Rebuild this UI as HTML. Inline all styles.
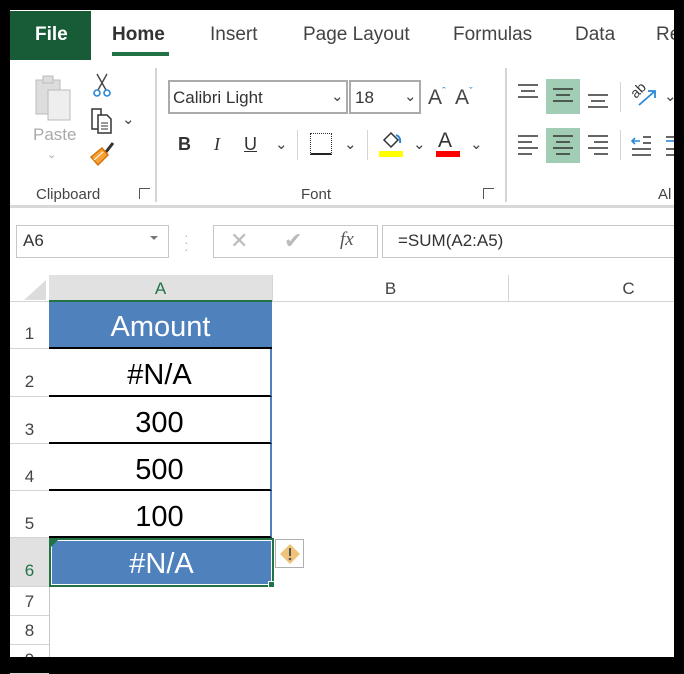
<!DOCTYPE html>
<html><head><meta charset="utf-8"><style>
*{margin:0;padding:0;box-sizing:border-box}
body{width:684px;height:667px;background:#000;position:relative;overflow:hidden;font-family:"Liberation Sans",sans-serif}
.a{position:absolute}
.w{background:#fff}
.t{position:absolute;font-size:19px;color:#444;top:24px}
.sm{font-size:15px;color:#444}
.hdr{font-size:17px;color:#444;text-align:center}
.rn{position:absolute;left:10px;width:39px;text-align:center;font-size:17px;color:#444;border-bottom:1px solid #d4d4d4}
.cell{position:absolute;left:49px;width:223px;text-align:center;font-size:29px;color:#000;background:#fff;border-bottom:2px solid #000;border-right:2px solid #4f81bd}
</style></head><body>
<div class="a w" style="left:10px;top:10px;width:664px;height:647px"></div>
<!-- tabs -->
<div class="a" style="left:10px;top:11px;width:81px;height:49px;background:#185c37"></div>
<div class="t" style="left:35px;color:#fff;font-weight:bold">File</div>
<div class="t" style="left:112px;color:#333;font-weight:bold">Home</div>
<div class="a" style="left:112px;top:52px;width:57px;height:4px;background:#217346"></div>
<div class="t" style="left:210px">Insert</div>
<div class="t" style="left:303px">Page Layout</div>
<div class="t" style="left:453px">Formulas</div>
<div class="t" style="left:575px">Data</div>
<div class="t" style="left:656px">Re</div>
<!-- ribbon -->
<div class="a" style="left:10px;top:205px;width:664px;height:3px;background:#d8d8d8"></div>
<div class="a" style="left:155px;top:68px;width:2px;height:134px;background:#d4d4d4"></div>
<div class="a" style="left:381px;top:68px;width:0"></div>
<div class="a" style="left:505px;top:68px;width:2px;height:134px;background:#d4d4d4"></div>
<!-- clipboard -->
<svg class="a" style="left:34px;top:72px" width="40" height="50"><rect x="2" y="8" width="24" height="34" fill="#ddd" stroke="#bbb"/><rect x="9" y="4" width="10" height="7" fill="#ddd" stroke="#bbb"/><rect x="14" y="18" width="22" height="30" fill="#eee" stroke="#bbb"/></svg>
<div class="a" style="left:33px;top:125px;font-size:17px;color:#aaa">Paste</div>
<div class="a" style="left:47px;top:148px;font-size:11px;color:#aaa">⌄</div>
<svg class="a" style="left:92px;top:72px" width="20" height="26"><path d="M5 2 L14 18 M15 2 L6 18" stroke="#444" stroke-width="1.4" fill="none"/><circle cx="5" cy="21" r="3" stroke="#2b88d8" stroke-width="1.6" fill="none"/><circle cx="15" cy="21" r="3" stroke="#2b88d8" stroke-width="1.6" fill="none"/></svg>
<svg class="a" style="left:90px;top:107px" width="26" height="28"><path d="M2 2h9v20h-9z" fill="#fff" stroke="#333" stroke-width="1.5"/><path d="M8 8h9l4 4v14h-13z" fill="#fff" stroke="#333" stroke-width="1.5"/><path d="M11 16h7M11 19h7M11 22h7" stroke="#333"/></svg>
<div class="a sm" style="left:122px;top:110px">⌄</div>
<svg class="a" style="left:88px;top:140px" width="30" height="28"><path d="M18 12 L25 3" stroke="#333" stroke-width="3"/><path d="M3 17 L14 8 L20 15 L10 25 Z" fill="#f6a23b" stroke="#d86e00" stroke-width="1.4"/><path d="M6 20 L15 12" stroke="#fff"/></svg>
<div class="a sm" style="left:36px;top:186px">Clipboard</div>
<div class="a" style="left:139px;top:188px;width:11px;height:11px;border:1px solid #555;border-right:none;border-bottom:none"></div>
<!-- font -->
<div class="a" style="left:168px;top:80px;width:180px;height:34px;border:2px solid #aaa"></div>
<div class="a" style="left:173px;top:88px;font-size:17px;color:#333">Calibri Light</div>
<div class="a sm" style="left:331px;top:87px">⌄</div>
<div class="a" style="left:349px;top:80px;width:72px;height:34px;border:2px solid #aaa"></div>
<div class="a" style="left:355px;top:88px;font-size:17px;color:#333">18</div>
<div class="a sm" style="left:404px;top:87px">⌄</div>
<div class="a" style="left:428px;top:86px;font-size:21px;color:#444">A<span style="font-size:11px;color:#2b88d8;vertical-align:top">ˆ</span></div>
<div class="a" style="left:455px;top:86px;font-size:21px;color:#444">A<span style="font-size:11px;color:#2b88d8;vertical-align:top">ˇ</span></div>
<div class="a" style="left:178px;top:134px;font-size:18px;font-weight:bold;color:#333">B</div>
<div class="a" style="left:214px;top:134px;font-size:18px;font-style:italic;color:#333;font-family:'Liberation Serif',serif">I</div>
<div class="a" style="left:244px;top:134px;font-size:18px;color:#333;text-decoration:underline">U</div>
<div class="a sm" style="left:275px;top:135px">⌄</div>
<div class="a" style="left:297px;top:130px;width:1px;height:30px;background:#d4d4d4"></div>
<div class="a" style="left:310px;top:133px;width:22px;height:22px;border:1px dotted #333;border-bottom:2px solid #222"></div>
<div class="a sm" style="left:344px;top:135px">⌄</div>
<div class="a" style="left:367px;top:130px;width:1px;height:30px;background:#d4d4d4"></div>
<svg class="a" style="left:380px;top:130px" width="26" height="20"><path d="M4 10 L11 3 L18 10 L11 17 Z" fill="#fff" stroke="#333" stroke-width="1.5"/><path d="M16 5 q5 2 4 8" stroke="#2b88d8" stroke-width="2" fill="none"/></svg>
<div class="a" style="left:379px;top:151px;width:24px;height:6px;background:#ffff00"></div>
<div class="a sm" style="left:413px;top:135px">⌄</div>
<div class="a" style="left:438px;top:129px;font-size:21px;color:#333">A</div>
<div class="a" style="left:436px;top:151px;width:24px;height:6px;background:#f00"></div>
<div class="a sm" style="left:470px;top:135px">⌄</div>
<div class="a sm" style="left:301px;top:186px">Font</div>
<div class="a" style="left:483px;top:188px;width:11px;height:11px;border:1px solid #555;border-right:none;border-bottom:none"></div>
<!-- alignment -->
<div class="a" style="left:546px;top:79px;width:34px;height:35px;background:#a0cdb3"></div>
<div class="a" style="left:546px;top:128px;width:34px;height:35px;background:#a0cdb3"></div>
<svg class="a" style="left:515px;top:80px" width="100" height="90">
<g stroke="#333" stroke-width="1.6">
<path d="M3 5h20M6 11h14M3 17h20"/>
<path d="M38 9h20M41 15h14M38 21h20"/>
<path d="M73 15h20M76 21h14M73 27h20"/>
<path d="M3 56h20M3 62h14M3 68h20M3 74h14"/>
<path d="M38 56h20M41 62h14M38 68h20M41 74h14"/>
<path d="M73 56h20M79 62h14M73 68h20M79 74h14"/>
</g></svg>
<div class="a" style="left:620px;top:82px;width:1px;height:30px;background:#d4d4d4"></div>
<div class="a" style="left:620px;top:130px;width:1px;height:30px;background:#d4d4d4"></div>
<div class="a" style="left:630px;top:82px;font-size:14px;color:#333;transform:rotate(-45deg)">ab</div>
<svg class="a" style="left:636px;top:86px" width="24" height="22"><path d="M3 19 L19 5 M12 5h7v7" stroke="#2b88d8" stroke-width="1.8" fill="none"/></svg>
<div class="a sm" style="left:664px;top:87px">⌄</div>
<svg class="a" style="left:630px;top:133px" width="44" height="28"><path d="M2 8h8M5 5l-3 3 3 3" stroke="#2b88d8" stroke-width="1.6" fill="none"/><path d="M13 4h8M13 10h8M2 16h19M2 22h19" stroke="#333" stroke-width="1.6"/><path d="M36 8h8" stroke="#2b88d8" stroke-width="1.6"/><path d="M36 4h8M36 16h8M36 22h8" stroke="#333" stroke-width="1.6"/></svg>
<div class="a sm" style="left:658px;top:186px">Al</div>
<!-- formula bar -->
<div class="a" style="left:16px;top:225px;width:153px;height:33px;border:1px solid #c6c6c6"></div>
<div class="a" style="left:23px;top:231px;font-size:17px;color:#333">A6</div>
<div class="a" style="left:150px;top:236px;width:0;height:0;border-left:4px solid transparent;border-right:4px solid transparent;border-top:4px solid #777"></div>
<div class="a" style="left:184px;top:232px;color:#bbb;font-size:14px;line-height:7px">·<br>·<br>·</div>
<div class="a" style="left:213px;top:225px;width:165px;height:33px;border:1px solid #c6c6c6"></div>
<div class="a" style="left:230px;top:228px;font-size:22px;color:#bbb">✕</div>
<div class="a" style="left:284px;top:228px;font-size:22px;color:#bbb">✔</div>
<div class="a" style="left:340px;top:229px;font-size:19px;color:#555;font-style:italic;font-family:'Liberation Serif',serif">fx</div>
<div class="a" style="left:382px;top:225px;width:292px;height:33px;border:1px solid #c6c6c6;border-right:none"></div>
<div class="a" style="left:398px;top:231px;font-size:17px;color:#333">=SUM(A2:A5)</div>
<!-- column headers -->
<div class="a" style="left:10px;top:275px;width:664px;height:27px;border-bottom:1px solid #d4d4d4"></div>
<svg class="a" style="left:20px;top:278px" width="28" height="24"><path d="M26 2 L26 22 L4 22 Z" fill="#dcdcdc"/></svg>
<div class="a hdr" style="left:49px;top:275px;width:223px;height:27px;background:#e1e1e1;border-bottom:2px solid #217346;color:#217346;line-height:27px">A</div>
<div class="a hdr" style="left:272px;top:275px;width:236px;height:27px;border-left:1px solid #d4d4d4;line-height:27px">B</div>
<div class="a hdr" style="left:508px;top:275px;width:240px;height:27px;border-left:1px solid #d4d4d4;line-height:27px">C</div>
<!-- row headers -->
<div class="a" style="left:49px;top:302px;width:1px;height:355px;background:#c6c6c6"></div>
<div class="rn" style="top:302px;height:47px;line-height:64px">1</div>
<div class="rn" style="top:349px;height:48px;line-height:66px">2</div>
<div class="rn" style="top:397px;height:47px;line-height:66px">3</div>
<div class="rn" style="top:444px;height:47px;line-height:66px">4</div>
<div class="rn" style="top:491px;height:47px;line-height:66px">5</div>
<div class="rn" style="top:538px;height:49px;line-height:66px;background:#e1e1e1;color:#217346">6</div>
<div class="rn" style="top:587px;height:29px;line-height:29px">7</div>
<div class="rn" style="top:616px;height:29px;line-height:29px">8</div>
<div class="rn" style="top:645px;height:29px;line-height:29px">9</div>
<!-- cells -->
<div class="a" style="left:49px;top:302px;width:223px;height:47px;background:#4f81bd;color:#fff;font-size:29px;text-align:center;line-height:50px;border-bottom:2px solid #000">Amount</div>
<div class="cell" style="top:349px;height:48px;line-height:52px">#N/A</div>
<div class="cell" style="top:397px;height:47px;line-height:52px">300</div>
<div class="cell" style="top:444px;height:47px;line-height:52px">500</div>
<div class="cell" style="top:491px;height:47px;line-height:52px">100</div>
<div class="a" style="left:49px;top:538px;width:225px;height:49px;background:#4f81bd;border:2px solid #217346;box-shadow:inset 0 0 0 1px #fff;color:#fff;font-size:29px;text-align:center;line-height:48px">#N/A</div>
<div class="a" style="left:51px;top:540px;width:0;height:0;border-top:7px solid #217346;border-right:7px solid transparent"></div>
<div class="a" style="left:268px;top:581px;width:7px;height:7px;background:#217346;border:1px solid #fff"></div>
<div class="a" style="left:275px;top:539px;width:29px;height:29px;border:1px solid #b0b0b0;background:#fff"></div>
<svg class="a" style="left:278px;top:542px" width="24" height="24"><path d="M12 2 L22 12 L12 22 L2 12 Z" fill="#efc47a"/><path d="M12 6v8" stroke="#555" stroke-width="2"/><circle cx="12" cy="17" r="1.3" fill="#555"/></svg>
<!-- black frame -->
<div class="a" style="left:0;top:657px;width:684px;height:10px;background:#000"></div>
<div class="a" style="left:674px;top:0;width:10px;height:667px;background:#000"></div>
</body></html>
